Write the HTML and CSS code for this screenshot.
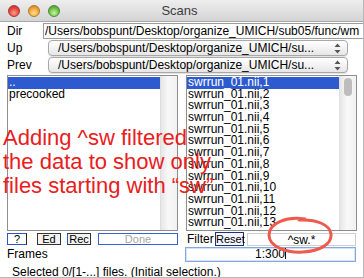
FILE: index.html
```html
<!DOCTYPE html>
<html lang="en">
<head>
  <meta charset="UTF-8" />
  <title>Scans</title>
  <link rel="stylesheet" href="styles.css">
</head>
<body>

<div class="window">
  <div class="titlebar">
    <div class="lights">
      <span class="light red"></span>
      <span class="light orange"></span>
      <span class="light green"></span>
    </div>
    <div class="title">Scans</div>
    <div></div>
  </div>

  <div class="path-row">
    <span class="lbl">Dir</span>
    <div class="field dir">/Users/bobspunt/Desktop/organize_UMICH/sub05/func/wm</div>
  </div>
  <div class="path-row">
    <span class="lbl">Up</span>
    <div class="popup">
      <span>/Users/bobspunt/Desktop/organize_UMICH/su...</span>
      <svg width="7" height="11" viewBox="0 0 7 11"><path d="M3.5 0.5 L6.5 4 H0.5 Z M3.5 10.5 L6.5 7 H0.5 Z" fill="#555"/></svg>
    </div>
  </div>
  <div class="path-row">
    <span class="lbl">Prev</span>
    <div class="popup">
      <span>/Users/bobspunt/Desktop/organize_UMICH/su...</span>
      <svg width="7" height="11" viewBox="0 0 7 11"><path d="M3.5 0.5 L6.5 4 H0.5 Z M3.5 10.5 L6.5 7 H0.5 Z" fill="#555"/></svg>
    </div>
  </div>

  <div class="lists">
    <div class="list">
      <div class="items">
        <div class="item sel">..</div>
        <div class="item">precooked</div>
      </div>
      <div class="scroll"></div>
    </div>
    <div class="list">
      <div class="items">
        <div class="item sel">swrrun_01.nii,1</div>
        <div class="item">swrrun_01.nii,2</div>
        <div class="item">swrrun_01.nii,3</div>
        <div class="item">swrrun_01.nii,4</div>
        <div class="item">swrrun_01.nii,5</div>
        <div class="item">swrrun_01.nii,6</div>
        <div class="item">swrrun_01.nii,7</div>
        <div class="item">swrrun_01.nii,8</div>
        <div class="item">swrrun_01.nii,9</div>
        <div class="item">swrrun_01.nii,10</div>
        <div class="item">swrrun_01.nii,11</div>
        <div class="item">swrrun_01.nii,12</div>
        <div class="item">swrrun_01.nii,13</div>
      </div>
      <div class="scroll"><div class="thumb"></div></div>
    </div>
  </div>

  <div class="controls">
    <div class="btn-row">
      <span class="tk-btn q">?</span>
      <span class="tk-btn ed">Ed</span>
      <span class="tk-btn rec">Rec</span>
      <span class="tk-btn done">Done</span>
    </div>
    <div class="filter-row">
      <span class="filter-lbl">Filter</span>
      <span class="reset">Reset</span>
      <div class="entry filter">^sw.*</div>
    </div>
    <div class="frames-lbl">Frames</div>
    <div class="entry frames">1:300<span class="caret"></span></div>
  </div>

  <div class="status">Selected 0/[1-...] files. (Initial selection.)</div>

  <!-- annotation drawn on top of the screenshot -->
  <div class="note">Adding ^sw filtered<br>the data to show only<br>files starting with “sw”</div>
  <svg class="circle" width="70" height="40" viewBox="0 0 70 40">
    <path d="M40 3 C22 0 4 7 4 19 C4 31 22 37 38 36 C55 35 67 28 66 18 C65 9 52 3 34 4" fill="none" stroke="#ee5a4b" stroke-width="3" stroke-linecap="round"/>
  </svg>
</div>

</body>
</html>
```

FILE: styles.css
```css
body {
  margin: 0;
  font-family: "Liberation Sans", Arial, sans-serif;
  font-size: 12px;
  color: #000;
  background: #fff;
}

.window {
  position: relative;
  width: 364px;
  height: 278px;
  overflow: hidden;
  box-sizing: border-box;
  border-right: 1px solid #b8b8b8;
  border-bottom: 1px solid #b8b8b8;
}

/* barra de titulo */
.titlebar {
  height: 21px;
  display: grid;
  grid-template-columns: 1fr auto 1fr;
  align-items: center;
  background: linear-gradient(#eeeeee, #d4d4d4);
  border-bottom: 1px solid #a9a9a9;
}

.lights {
  display: flex;
  gap: 8px;
  padding-left: 8px;
}

.light {
  width: 12px;
  height: 12px;
  border-radius: 50%;
  box-sizing: border-box;
}

.red {
  background: radial-gradient(circle at 50% 70%, #ff9b8f, #e5463c 55%, #b32a22);
  border: 1px solid #a63a33;
}

.orange {
  background: radial-gradient(circle at 50% 70%, #ffe08a, #f0a53a 55%, #c47a1c);
  border: 1px solid #b07a2a;
}

.green {
  background: radial-gradient(circle at 50% 70%, #c9f5a0, #6cc04a 55%, #3f8a28);
  border: 1px solid #4d8a36;
}

.title {
  font-size: 13px;
  color: #3c3c3c;
  padding-right: 4px;
}

/* filas de rutas */
.path-row {
  display: flex;
  align-items: center;
  height: 17px;
  padding-left: 7px;
}

.path-row:first-of-type {
  margin-top: 1px;
}

.lbl {
  width: 36px;
  flex: none;
}

.field {
  flex: none;
  width: 330px;
  height: 16px;
  box-sizing: border-box;
  border: 1px solid #9c9c9c;
  padding-left: 1px;
  line-height: 14px;
  white-space: nowrap;
  overflow: hidden;
}

.popup {
  flex: none;
  width: 300px;
  height: 16px;
  margin-left: 5px;
  margin-top: 1px;
  box-sizing: border-box;
  border: 1px solid #a8a8a8;
  border-radius: 4px;
  background: linear-gradient(#ffffff, #f3f3f3 50%, #e6e6e6);
  box-shadow: 0 1px 1px rgba(0,0,0,0.12);
  display: flex;
  align-items: center;
  justify-content: space-between;
  padding: 0 6px 0 9px;
  white-space: nowrap;
}

/* listas */
.lists {
  display: grid;
  grid-template-columns: 171px 171px;
  column-gap: 8px;
  margin: 2px 0 0 7px;
  height: 156px;
}

.list {
  border: 1px solid #8e8e8e;
  display: flex;
  overflow: hidden;
}

.items {
  flex: 1;
  padding-top: 1px;
  overflow: hidden;
}

.item {
  height: 11.7px;
  line-height: 11.7px;
  padding-left: 1px;
  white-space: nowrap;
}

.item.sel {
  background: #2d5bcf;
  color: #fff;
}

.scroll {
  width: 16px;
  flex: none;
  background: linear-gradient(to right, #e6e6e6, #f8f8f8 45%, #f1f1f1);
  border-left: 1px solid #dedede;
}

.thumb {
  width: 8px;
  height: 18px;
  margin: 2px 0 0 4px;
  border-radius: 4px;
  background: #bdbdbd;
}

/* controles de abajo */
.controls {
  display: grid;
  grid-template-columns: 171px 171px;
  column-gap: 8px;
  margin-left: 7px;
  margin-top: 1px;
}

.btn-row {
  display: flex;
  align-items: center;
}

.tk-btn {
  height: 12px;
  box-sizing: border-box;
  line-height: 10px;
  text-align: center;
  font-size: 11px;
  background: #fff;
}

.q {
  width: 20px;
  margin-right: 10px;
  border: 1px solid #2f55c8;
  border-right-color: #222;
}

.ed {
  width: 24px;
  margin-right: 6px;
  border: 1px solid #333;
  background: #f2f2f2;
}

.rec {
  width: 24px;
  margin-right: 7px;
  border: 1px solid #333;
  border-left-color: #2f55c8;
  background: #f2f2f2;
}

.done {
  width: 80px;
  border: 1px solid #3561d4;
  color: #a6a6a6;
}

.filter-row {
  display: flex;
  align-items: center;
  height: 14px;
}

.filter-lbl {
  width: 28px;
  padding-left: 1px;
}

.reset {
  width: 29px;
  height: 14px;
  box-sizing: border-box;
  border: 1px solid #1f2f78;
  font-size: 11px;
  line-height: 12px;
  text-align: center;
  background: #f4f6ff;
  margin-right: 3px;
}

.entry {
  box-sizing: border-box;
  text-align: center;
  white-space: nowrap;
}

.filter {
  width: 109px;
  height: 13px;
  line-height: 12px;
  border: 1px solid #cfcfcf;
}

.frames-lbl {
  line-height: 14px;
  padding-top: 1px;
}

.frames {
  width: 171px;
  height: 15px;
  line-height: 13px;
  margin: 1px 0 0 -1px;
  border: 1px solid #86a8e0;
  box-shadow: inset 0 0 0 1px #d4e2f6;
}

.caret {
  display: inline-block;
  width: 1px;
  height: 11px;
  background: #000;
  vertical-align: -1px;
}

.status {
  padding: 3px 0 0 12px;
  line-height: 14px;
}

/* anotacion roja encima */
.note {
  position: absolute;
  left: 3px;
  top: 126px;
  color: #e8201d;
  font-size: 22px;
  line-height: 24px;
  white-space: nowrap;
}

.circle {
  position: absolute;
  left: 265px;
  top: 216px;
}
```
